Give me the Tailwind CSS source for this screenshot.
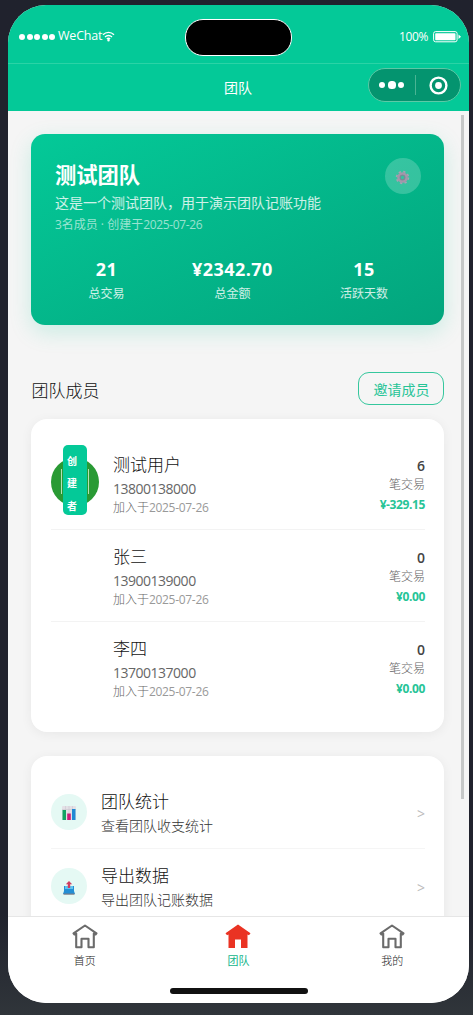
<!DOCTYPE html>
<html lang="zh-CN">
<head>
<meta charset="utf-8">
<title>团队</title>
<script src="https://cdn.jsdelivr.net/npm/@tailwindcss/browser@4"></script>
</head>
<body class="h-[1015px] w-[473px] overflow-hidden bg-gradient-to-b from-[#20222d] from-90% to-[#30353a] pt-[5px] pl-2 font-['Open_Sans','Noto_Sans_CJK_SC',sans-serif]">
<div class="flex h-[998px] w-[461px] flex-col overflow-hidden rounded-[38px] bg-[#f5f5f5]">

  <!-- Status bar -->
  <div class="grid h-[59px] shrink-0 grid-cols-[177px_106px_1fr] border-b border-[#2bd3a6] bg-[#04c998] text-[12.5px] text-white">
    <div class="flex h-[63px] items-center pl-[11px]">
      <div class="flex gap-[1.5px]">
        <i class="size-[6px] rounded-full bg-white"></i><i class="size-[6px] rounded-full bg-white"></i><i class="size-[6px] rounded-full bg-white"></i><i class="size-[6px] rounded-full bg-white"></i><i class="size-[6px] rounded-full bg-white"></i>
      </div>
      <span class="ml-[3px] tracking-[-0.2px]">WeChat</span>
      <svg class="h-[11px] w-[13px]" viewBox="0 0 12 11" fill="none" stroke="#fff" stroke-width="1.300"><path d="M.5 3.800C3.500.6 8.500.6 11.500 3.800M2.500 6c2-2 5-2 7 0M4.300 8c1-.9 2.400-.9 3.400 0"/><circle cx="6" cy="9.200" r=".6"/></svg>
    </div>
    <div class="mt-[14px] h-[37px] w-[107px] rounded-[18px] border border-white bg-black"></div>
    <div class="flex h-[63px] items-center justify-end pr-[8px]">
      <span class="mr-[5px] text-[12px] tracking-[-0.4px]">100%</span>
      <svg class="h-[12px] w-[28px]" viewBox="0 0 28 12"><rect x=".6" y=".6" width="23.500" height="10.200" rx="2" fill="none" stroke="#fff"/><rect x="2.200" y="2.200" width="20.300" height="7" rx=".8" fill="#fff"/><path d="M25.500 3.500 28 5.700l-2.500 2.200z" fill="#fff"/></svg>
    </div>
  </div>

  <!-- Navigation bar -->
  <div class="grid h-[47px] shrink-0 grid-cols-[1fr_60px_1fr] bg-[#04c998] text-white">
    <span></span>
    <span class="pr-px text-center text-[14px] leading-[48px]">团队</span>
    <div class="mt-1 mr-[8.500px] flex h-[34px] w-[93px] items-center justify-self-end rounded-full border border-[#5cc9a6] bg-[#04946f]">
      <div class="flex w-[46px] items-center justify-center gap-[2.500px]">
        <i class="size-[6px] rounded-full bg-white"></i><i class="h-[8px] w-[8px] rounded-[3.500px] bg-white"></i><i class="size-[6px] rounded-full bg-white"></i>
      </div>
      <i class="h-[20px] w-px bg-[#4ab493]"></i>
      <svg class="ml-[13px] size-[19px]" viewBox="0 0 19 19"><circle cx="9.500" cy="9.500" r="7.900" fill="none" stroke="#fff" stroke-width="2.400"/><circle cx="9.500" cy="9.500" r="3.400" fill="#fff"/></svg>
    </div>
  </div>

  <!-- Scroll area -->
  <div class="flex min-h-0 flex-1 overflow-hidden">
    <main class="w-[453px] shrink-0 pt-[23.400px] pr-[16.600px] pl-[23.400px]">
      <section class="h-[190.500px] rounded-[14px] bg-gradient-to-br from-[#04c998] to-[#03a57d] px-[23.500px] pt-[24px] text-white shadow-[0_7px_22px_rgba(4,201,152,0.18)]">
        <div class="flex justify-between">
          <div>
            <h1 class="mt-[2px] h-[30px] text-[21.300px] leading-[30px] font-bold">测试团队</h1>
            <p class="mt-[3px] h-[20px] text-[14px] leading-[20px] text-white/80">这是一个测试团队，用于演示团队记账功能</p>
            <p class="mt-[3px] h-[18px] text-[12px] leading-[18px] text-white/60">3名成员 · 创建于<span class="tracking-[-0.350px]">2025-07-26</span></p>
          </div>
          <div class="flex size-[36px] items-center justify-center rounded-full bg-white/20">
            <svg class="mt-[3px] size-[15px]" viewBox="0 0 16 16" fill="none"><circle cx="8" cy="8" r="6.300" stroke="#a5a3b4" stroke-width="1.800" stroke-dasharray="2.500 2.450"/><circle cx="8" cy="8" r="4.300" stroke="#a596aa" stroke-width="2.800"/><circle cx="8" cy="8" r="2.400" stroke="#7f8795" stroke-width="1.200"/></svg>
          </div>
        </div>
        <div class="mt-[22px] flex justify-between px-[33px] text-center">
          <div class="w-[37px]"><b class="block h-[26px] text-[18px] leading-[26px] tracking-[0.450px]">21</b><span class="block text-[12px] leading-[24px] whitespace-nowrap text-white/80">总交易</span></div>
          <div class="w-[84px]"><b class="block h-[26px] text-[18px] leading-[26px] tracking-[0.450px]">¥2342.70</b><span class="block text-[12px] leading-[24px] text-white/80">总金额</span></div>
          <div class="w-[48px]"><b class="block h-[26px] text-[18px] leading-[26px] tracking-[0.450px]">15</b><span class="block text-[12px] leading-[24px] whitespace-nowrap text-white/80">活跃天数</span></div>
        </div>
      </section>

      <div class="mt-[47px] flex h-[33px] items-center justify-between">
        <h2 class="pt-[4px] text-[17px] leading-[33px] font-light text-[#111]">团队成员</h2>
        <span class="h-[33px] w-[86px] rounded-[11px] border border-[#35c79d] text-center text-[14px] leading-[34px] text-[#27c497]">邀请成员</span>
      </div>

      <section class="mt-[13.700px] h-[313.500px] rounded-[16px] bg-white px-[19.500px] pt-[19.500px] shadow-[0_2px_12px_rgba(0,0,0,0.06)]">
        <div class="flex h-[92px] border-b border-[#f3f3f3]">
          <div class="flex h-[70px] w-[62px] items-center">
            <div class="mt-[17px] flex size-[48px] items-center justify-center rounded-full bg-[#299a34]">
              <div class="flex h-[25px] w-[28px] items-center justify-center border-x border-[#b5e0b8]">
                <div class="mt-[-4px] h-[70px] w-[24px] shrink-0 rounded-[5px] bg-[#04c998] pt-[5px] pl-[4px] text-[10px] leading-[22.700px] font-bold text-white">创<br>建<br>者</div>
              </div>
            </div>
          </div>
          <div class="flex-1 pt-[14px]">
            <p class="h-[25px] text-[17px] leading-[25px] font-light text-[#111]">测试用户</p>
            <p class="mt-[2px] h-[20px] text-[14px] leading-[19px] tracking-[-0.480px] text-[#666]">13800138000</p>
            <p class="h-[18px] text-[12px] leading-[18px] font-light text-[#666]">加入于<span class="font-normal tracking-[-0.300px] text-[#999]">2025-07-26</span></p>
          </div>
          <div class="pt-[18px] text-right">
            <p class="h-[20px] text-[14px] leading-[20px] font-semibold text-[#444]">6</p>
            <p class="h-[18px] text-[12px] leading-[18px] font-light text-[#666]">笔交易</p>
            <p class="mt-[1px] h-[20px] text-[12px] leading-[20px] font-bold tracking-[-0.400px] text-[#27c497]">¥-329.15</p>
          </div>
        </div>
        <div class="flex h-[92px] border-b border-[#f3f3f3]">
          <div class="w-[62px]"></div>
          <div class="flex-1 pt-[14px]">
            <p class="h-[25px] text-[17px] leading-[25px] font-light text-[#111]">张三</p>
            <p class="mt-[2px] h-[20px] text-[14px] leading-[19px] tracking-[-0.480px] text-[#666]">13900139000</p>
            <p class="h-[18px] text-[12px] leading-[18px] font-light text-[#666]">加入于<span class="font-normal tracking-[-0.300px] text-[#999]">2025-07-26</span></p>
          </div>
          <div class="pt-[18px] text-right">
            <p class="h-[20px] text-[14px] leading-[20px] font-semibold text-[#444]">0</p>
            <p class="h-[18px] text-[12px] leading-[18px] font-light text-[#666]">笔交易</p>
            <p class="mt-[1px] h-[20px] text-[12px] leading-[20px] font-bold tracking-[-0.400px] text-[#27c497]">¥0.00</p>
          </div>
        </div>
        <div class="flex h-[92px]">
          <div class="w-[62px]"></div>
          <div class="flex-1 pt-[14px]">
            <p class="h-[25px] text-[17px] leading-[25px] font-light text-[#111]">李四</p>
            <p class="mt-[2px] h-[20px] text-[14px] leading-[19px] tracking-[-0.480px] text-[#666]">13700137000</p>
            <p class="h-[18px] text-[12px] leading-[18px] font-light text-[#666]">加入于<span class="font-normal tracking-[-0.300px] text-[#999]">2025-07-26</span></p>
          </div>
          <div class="pt-[18px] text-right">
            <p class="h-[20px] text-[14px] leading-[20px] font-semibold text-[#444]">0</p>
            <p class="h-[18px] text-[12px] leading-[18px] font-light text-[#666]">笔交易</p>
            <p class="mt-[1px] h-[20px] text-[12px] leading-[20px] font-bold tracking-[-0.400px] text-[#27c497]">¥0.00</p>
          </div>
        </div>
      </section>

      <section class="mt-[23.500px] h-[260px] rounded-[16px] bg-white px-[19.500px] pt-[19.500px] shadow-[0_2px_12px_rgba(0,0,0,0.06)]">
        <div class="flex h-[74px] items-center border-b border-[#f5f5f5]">
          <div class="flex size-[36px] items-center justify-center rounded-full bg-[#e5f9f4]">
            <svg class="mt-[2px] size-[14px]" viewBox="0 0 14 14"><rect width="14" height="14" rx="1" fill="#e3e1e6"/><path d="M0 3.500h14M3.500 0v14M7 0v14M10.500 0v14" stroke="#cbc8d0" stroke-width=".6"/><path d="M.5 4h3.500v10H.5z" fill="#14a364"/><path d="M5.200 7.500h3.600V14H5.200z" fill="#cf1c79"/><path d="M10 3h3.500v11H10z" fill="#208ad4"/></svg>
          </div>
          <div class="ml-[14px] flex-1 pt-[5px]">
            <p class="h-[24px] text-[17px] leading-[24px] font-light text-[#111]">团队统计</p>
            <p class="h-[24px] text-[14px] leading-[24px] font-light text-[#333]">查看团队收支统计</p>
          </div>
          <span class="pt-[3px] text-[14px] text-[#bbb]">&gt;</span>
        </div>
        <div class="flex h-[74px] items-center">
          <div class="flex size-[36px] items-center justify-center rounded-full bg-[#e5f9f4]">
            <svg class="mt-[3px] size-[14px]" viewBox="0 0 14 14"><path d="M2 5h10v5l1 3H1l1-3z" fill="#258fd5"/><path d="M3 5h8v3H3z" fill="#61c5f0"/><path d="M1.500 12.500h11v1.200h-11z" fill="#777984"/><path d="M7 0 3.800 3.300h2V7h2.400V3.300h2z" fill="#cf3c61"/></svg>
          </div>
          <div class="ml-[14px] flex-1 pt-[4px]">
            <p class="h-[24px] text-[17px] leading-[24px] font-light text-[#111]">导出数据</p>
            <p class="h-[24px] text-[14px] leading-[24px] font-light text-[#333]">导出团队记账数据</p>
          </div>
          <span class="pt-[3px] text-[14px] text-[#bbb]">&gt;</span>
        </div>
      </section>
    </main>
    <div class="mt-[4px] h-[684px] w-[3px] bg-[#c5c7c7]"></div>
  </div>

  <!-- Tab bar -->
  <nav class="h-[87px] shrink-0 border-t border-[#e6e6e6] bg-white">
    <div class="grid h-[73px] grid-cols-3 pt-[7px] text-center text-[11px] leading-[20px] font-light text-[#222]">
      <div class="flex flex-col items-center">
        <svg class="h-[25px] w-[26px]" viewBox="0 0 26 25" fill="none" stroke="#6b6b6b" stroke-width="2.100" stroke-linejoin="round"><path d="M13 1.500 1.500 9.300l1 1.200L4.200 9.600v13.600h5.300v-8.500h7v8.500h5.300V9.600l1.700.9 1-1.200z"/></svg>
        <span class="mt-[2px]">首页</span>
      </div>
      <div class="flex flex-col items-center font-normal text-[#12b58b]">
        <svg class="h-[25px] w-[26px]" viewBox="0 0 26 25" fill="#ea3323"><path d="M13 .5.500 9.300l1.500 1.900 1.500-.8v13.500H10v-8.500h6v8.500h6.500V10.400l1.500.8 1.500-1.900z"/></svg>
        <span class="mt-[2px]">团队</span>
      </div>
      <div class="flex flex-col items-center">
        <svg class="h-[25px] w-[26px]" viewBox="0 0 26 25" fill="none" stroke="#6b6b6b" stroke-width="2.100" stroke-linejoin="round"><path d="M13 1.500 1.500 9.300l1 1.200L4.200 9.600v13.600h5.300v-8.500h7v8.500h5.300V9.600l1.700.9 1-1.200z"/></svg>
        <span class="mt-[2px]">我的</span>
      </div>
    </div>
    <div class="mx-auto mt-[-2px] h-[6px] w-[138px] rounded-full bg-[#111]"></div>
  </nav>
</div>
</body>
</html>
